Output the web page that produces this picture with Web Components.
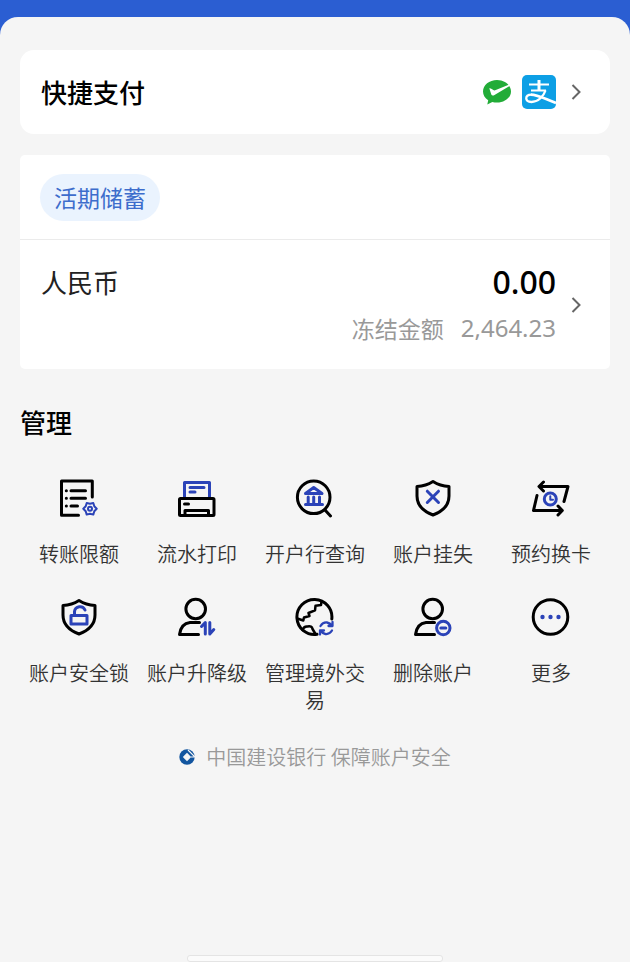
<!DOCTYPE html>
<html lang="zh-CN">
<head>
<meta charset="utf-8">
<meta name="viewport" content="width=device-width, initial-scale=1">
<title>账户管理</title>
<style>
  :root {
    --brand-color: #2b5ed2;
    --page-color: #f5f5f5;
    --icon-blue: #2b43b8;
    --muted-color: #999;
  }

  body {
    margin: 0;
    background: var(--page-color);
    color: #000;
    font-family: "Noto Sans CJK SC", sans-serif;
  }
</style>
</head>
<body>
<account-page>
  <quick-pay></quick-pay>
  <balance-card type="活期储蓄" currency="人民币" amount="0.00" frozen="2,464.23"></balance-card>
  <manage-section heading="管理">
    <manage-item icon="limit">转账限额</manage-item>
    <manage-item icon="print">流水打印</manage-item>
    <manage-item icon="bank">开户行查询</manage-item>
    <manage-item icon="loss">账户挂失</manage-item>
    <manage-item icon="swap">预约换卡</manage-item>
    <manage-item icon="lock">账户安全锁</manage-item>
    <manage-item icon="level">账户升降级</manage-item>
    <manage-item icon="globe">管理境外交易</manage-item>
    <manage-item icon="remove">删除账户</manage-item>
    <manage-item icon="more">更多</manage-item>
  </manage-section>
  <bank-footer>中国建设银行 保障账户安全</bank-footer>
</account-page>

<script>
// 40x40 icons, k = black stroke, b = blue stroke, f = blue fill
const shield = '<path class="k" d="M20 3.500Q27 8 36 8.500V18Q36 31 20 37Q4 31 4 18V8.500Q13 8 20 3.500Z"/>';

const icons = {
  limit: `
    <path class="k" d="M19.500 37.300H2.500V3H33.300V19"/>
    <path class="k" d="M12 12.700H26.500M12 20.300H26.500M12 28H18.500"/>
    <path class="k" d="M7.300 12.700h.1M7.300 20.300h.1M7.300 28h.1"/>
    <path class="b" d="M37.700 30.800L35.300 28.300L34.300 25L31 25.800L27.700 25L26.700 28.300L24.300 30.800L26.700 33.300L27.700 36.600L31 35.800L34.300 36.600L35.300 33.300Z" stroke-width="2"/>
    <circle class="b" cx="31" cy="30.800" r="2" stroke-width="2"/>`,
  print: `
    <path class="b" d="M7.500 19V4.500H32.500V19M13 9.500H27M13 14H18"/>
    <rect class="k" x="2.500" y="20.500" width="34.500" height="17" rx="1"/>
    <path class="k" d="M7.500 26H11.500M8 37V32.500H31.500V37"/>`,
  bank: `
    <circle class="k" cx="18.700" cy="19.300" r="16.300"/>
    <path class="k" d="M30 32L35.500 38"/>
    <path class="b" d="M10.500 15.500L18.700 9.500L27 15.500ZM13.200 19V26M18.700 19V26M24.500 19V26M10.500 26.500H27.500"/>`,
  loss: shield + '<path class="b" d="M14.300 13.200L25.500 24.500M25.500 13.200L14.300 24.500"/>',
  swap: `
    <path class="k" d="M12.500 4L8 8.500L12.500 13M8.500 8.500H37L33 23.500M6 17.500L2.500 32.500H31M27 28L31.300 32.500L27 37"/>
    <circle class="b" cx="19.300" cy="21" r="6"/>
    <path class="b" d="M19.300 18.300V21.800H22" stroke-width="2"/>`,
  lock: shield + `
    <rect class="b" x="12" y="18.500" width="16" height="8.500"/>
    <path class="b" d="M15.500 18V14.500A5.500 5.500 0 0 1 26 13"/>`,
  level: `
    <circle class="k" cx="18.700" cy="12" r="9.800"/>
    <path class="k" d="M22.500 25.500H13Q4 26.500 2.500 37.500H21.500"/>
    <path class="b" d="M24.500 29.500L28.300 25.500V37M32.800 25.500V37L36.800 32.500"/>`,
  globe: `
    <path class="k" d="M36.800 22A17.500 17.500 0 1 0 22 37.300"/>
    <path class="k" d="M26.500 4.500L26 8L20.500 8.800L20 13.300L13.500 16L14.500 19L9 20.500L8.300 23.500L3 21.800M7.500 33Q9 29 12.500 29.500Q17 28.500 17.500 32L20.500 37" stroke-width="2.500"/>
    <path class="b" d="M25.500 29Q28 25 32 25.500Q35 26 37 29M37.500 25V29H33.500M37 33.500Q34.500 37.500 30.500 37Q27.500 36.500 25.500 33.500M25 37.500V33.500H29" stroke-width="2.300"/>`,
  remove: `
    <circle class="k" cx="19.700" cy="12" r="9.800"/>
    <path class="k" d="M21.500 25.500H13Q4 26.500 2.500 37.500H21.500"/>
    <circle class="b" cx="30.300" cy="31" r="6.700"/>
    <path class="b" d="M27.800 31H32.800"/>`,
  more: `
    <circle class="k" cx="19.500" cy="20" r="17.300"/>
    <circle class="f" cx="11.500" cy="20" r="2.200"/>
    <circle class="f" cx="19.500" cy="20" r="2.200"/>
    <circle class="f" cx="27.500" cy="20" r="2.200"/>`
};

const chevron = `
  <svg width="10" height="16" viewBox="0 0 10 16" fill="none" stroke="#666" stroke-width="2" aria-hidden="true">
    <path d="M1.500 1L8.500 8L1.500 15"/>
  </svg>`;

class AccountPage extends HTMLElement {
  constructor() {
    super();
    this.attachShadow({ mode: 'open' }).innerHTML = `
      <style>
        :host {
          display: flex;
          flex-direction: column;
          min-height: 100vh;
          box-sizing: border-box;
          padding-top: 17px;
          background: var(--brand-color);
        }

        main {
          flex: 1;
          display: flex;
          flex-direction: column;
          padding: 33px 20px 0;
          border-radius: 18px 18px 0 0;
          background: var(--page-color);
        }

        .handle {
          width: 43%;
          height: 5px;
          margin: auto auto 0;
          border: 1px solid #e4e4e4;
          border-radius: 3px;
          background: #fbfbfb;
        }
      </style>
      <main>
        <slot></slot>
        <div class="handle"></div>
      </main>
    `;
  }
}

customElements.define('account-page', AccountPage);

class QuickPay extends HTMLElement {
  constructor() {
    super();
    this.attachShadow({ mode: 'open' }).innerHTML = `
      <style>
        :host {
          display: block;
        }

        a {
          display: flex;
          align-items: center;
          height: 84px;
          padding: 0 29px 0 21px;
          border-radius: 14px;
          background: #fff;
          color: inherit;
          font-size: 26px;
          font-weight: 500;
          line-height: 38px;
          text-decoration: none;
          box-sizing: border-box;
        }

        .title {
          flex: 1;
        }

        .alipay {
          margin: 0 15px 0 11px;
        }
      </style>
      <a href="#quick-pay">
        <span class="title">快捷支付</span>
        <svg width="28" height="26" viewBox="0 0 28 26" aria-hidden="true">
          <path fill="#22ac38" d="M14 1C6.300 1 0 6 0 12.500c0 3.600 2 6.600 5.200 8.700L4.300 25.500l5-2.500c1.500.4 3 .6 4.700.6 7.700 0 14-5 14-11.200S21.700 1 14 1z"/>
          <path fill="#fff" d="M6.300 9.300c1-.5 1.800.2 4 1.800 1 .5 1.500.3 2.500-.1L26.300 5.500l1 1L11.500 16c-1.500.8-2.500.8-3.200-.5z"/>
        </svg>
        <svg class="alipay" width="34" height="34" viewBox="0 0 34 34" fill="none" stroke="#fff" aria-hidden="true">
          <rect width="34" height="34" rx="5" fill="#0d9fe5" stroke="none"/>
          <path stroke-width="2" d="M7 9.500H27M9 15.500H24"/>
          <path stroke-width="3" d="M17 5V15.500"/>
          <path stroke-width="2.300" d="M23.500 15.500C21.500 21.500 16 27 9.500 27C2.500 27 2.500 19.700 9.500 19.700"/>
          <path stroke-width="2.700" d="M9 19.700C16 19.700 24 24.500 34 28"/>
        </svg>
        ${chevron}
      </a>
    `;
  }
}

customElements.define('quick-pay', QuickPay);

class BalanceCard extends HTMLElement {
  constructor() {
    super();
    this.shadowDOM = this.attachShadow({ mode: 'open' });
  }

  connectedCallback() {
    this.shadowDOM.innerHTML = `
      <style>
        :host {
          display: block;
          margin-top: 21px;
          border-radius: 5px;
          background: #fff;
        }

        header {
          display: flex;
          align-items: center;
          height: 84px;
          padding: 0 20px;
          border-bottom: 1px solid #ebebeb;
        }

        button {
          height: 47px;
          padding: 0 14px;
          border: 0;
          border-radius: 24px;
          background: #eaf3fe;
          color: #3d6dcc;
          font: inherit;
          font-size: 23px;
        }

        a {
          display: flex;
          align-items: center;
          padding: 19px 29px 18px 21px;
          color: inherit;
          text-decoration: none;
        }

        dl {
          flex: 1;
          margin: 0 15px 0 0;
          line-height: 46px;
        }

        dl > div {
          display: flex;
        }

        dd {
          margin: 0;
          font-family: "Noto Sans", "Noto Sans CJK SC", sans-serif;
        }

        .balance {
          justify-content: space-between;
          color: #222;
          font-size: 26px;
        }

        .balance dd {
          color: #000;
          font-size: 32px;
          font-weight: 500;
        }

        .frozen {
          justify-content: flex-end;
          gap: 17px;
          color: var(--muted-color);
          font-size: 23px;
        }

        .frozen dd {
          font-size: 24px;
        }
      </style>
      <header><button type="button">${this.getAttribute('type')}</button></header>
      <a href="#detail">
        <dl>
          <div class="balance"><dt>${this.getAttribute('currency')}</dt><dd>${this.getAttribute('amount')}</dd></div>
          <div class="frozen"><dt>冻结金额</dt><dd>${this.getAttribute('frozen')}</dd></div>
        </dl>
        ${chevron}
      </a>
    `;
  }
}

customElements.define('balance-card', BalanceCard);

class ManageSection extends HTMLElement {
  constructor() {
    super();
    this.shadowDOM = this.attachShadow({ mode: 'open' });
  }

  connectedCallback() {
    this.shadowDOM.innerHTML = `
      <style>
        :host {
          display: block;
          margin-top: 33px;
        }

        h2 {
          margin: 0 0 36px;
          font-size: 26px;
          font-weight: 500;
          line-height: 40px;
        }

        .grid {
          display: grid;
          grid-template-columns: repeat(5, 1fr);
          row-gap: 30px;
        }
      </style>
      <h2>${this.getAttribute('heading')}</h2>
      <div class="grid"><slot></slot></div>
    `;
  }
}

customElements.define('manage-section', ManageSection);

class ManageItem extends HTMLElement {
  constructor() {
    super();
    this.shadowDOM = this.attachShadow({ mode: 'open' });
  }

  connectedCallback() {
    this.shadowDOM.innerHTML = `
      <style>
        :host {
          display: block;
        }

        button {
          display: flex;
          flex-direction: column;
          align-items: center;
          gap: 22px;
          width: 100%;
          padding: 0 8px;
          border: 0;
          background: none;
          color: #333;
          font: inherit;
          font-size: 20px;
          font-weight: 350;
          line-height: 27px;
        }

        svg {
          fill: none;
          stroke-width: 3;
          stroke-linejoin: round;
          stroke-linecap: round;
        }

        .k {
          stroke: #000;
        }

        .b {
          stroke: var(--icon-blue);
        }

        .f {
          fill: var(--icon-blue);
        }
      </style>
      <button type="button">
        <svg width="40" height="40" viewBox="0 0 40 40" aria-hidden="true">${icons[this.getAttribute('icon')]}</svg>
        <span><slot></slot></span>
      </button>
    `;
  }
}

customElements.define('manage-item', ManageItem);

class BankFooter extends HTMLElement {
  constructor() {
    super();
    this.attachShadow({ mode: 'open' }).innerHTML = `
      <style>
        :host {
          display: flex;
          justify-content: center;
          align-items: center;
          gap: 11px;
          margin: 30px 0;
          color: var(--muted-color);
          font-size: 20px;
          font-weight: 350;
          line-height: 27px;
        }
      </style>
      <svg width="16" height="16" viewBox="0 0 16 16" aria-hidden="true">
        <circle cx="8" cy="8" r="7.700" fill="#12559f"/>
        <path fill="#f5f5f5" d="M8 3.800L12.200 8L8 12.200L3.800 8Z"/>
        <path stroke="#f5f5f5" stroke-width="1.200" d="M9 1L16 8M12 8H16"/>
      </svg>
      <span><slot></slot></span>
    `;
  }
}

customElements.define('bank-footer', BankFooter);
</script>
</body>
</html>
